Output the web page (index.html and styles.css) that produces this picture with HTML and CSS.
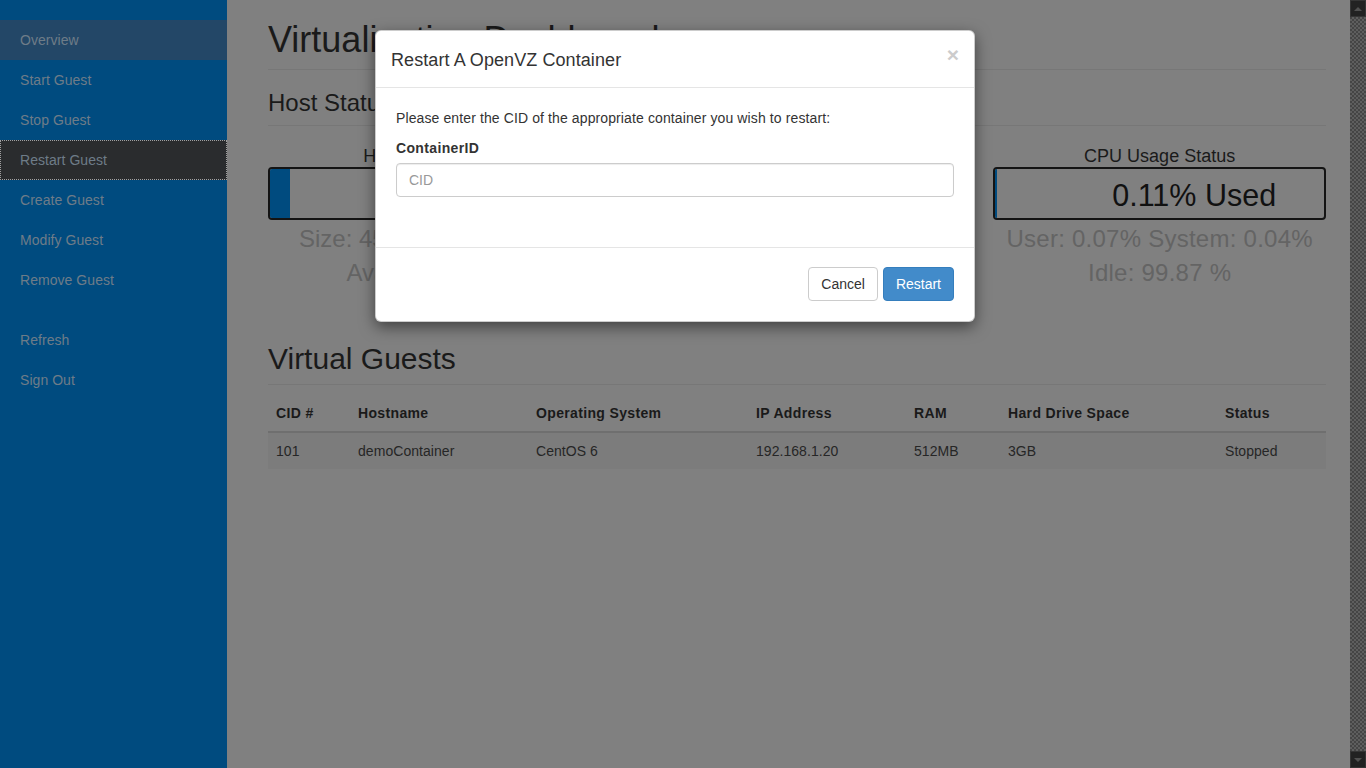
FILE: index.html
```html
<!DOCTYPE html>
<html lang="en">
<head>
<meta charset="utf-8">
<title>Virtualization Dashboard</title>
<link rel="stylesheet" href="styles.css">
</head>
<body class="page">
  <nav class="sidebar">
    <ul class="nav">
      <li class="nav-item active">Overview</li>
      <li class="nav-item">Start Guest</li>
      <li class="nav-item">Stop Guest</li>
      <li class="nav-item focused">Restart Guest</li>
      <li class="nav-item">Create Guest</li>
      <li class="nav-item">Modify Guest</li>
      <li class="nav-item">Remove Guest</li>
    </ul>
    <ul class="nav nav-secondary">
      <li class="nav-item">Refresh</li>
      <li class="nav-item">Sign Out</li>
    </ul>
  </nav>

  <main class="main">
    <h1 class="page-title">Virtualization Dashboard</h1>
    <h3 class="section-title">Host Status</h3>
    <div class="status-row">
      <div class="status-col">
        <div class="status-label">Hard Drive Status</div>
        <div class="bar">
          <div class="bar-fill" style="width:6%"></div>
          <div class="bar-text">6% Used</div>
        </div>
        <div class="stats stats-tight">Size: 45G Used: 3G (6%)<br>Available: 42.0G</div>
      </div>
      <div class="status-col">
        <div class="status-label">Memory Usage Status</div>
        <div class="bar">
          <div class="bar-fill" style="width:20%"></div>
          <div class="bar-text">20% Used</div>
        </div>
        <div class="stats">Total: 2048MB Used: 410MB<br>Free: 1638MB</div>
      </div>
      <div class="status-col">
        <div class="status-label">CPU Usage Status</div>
        <div class="bar">
          <div class="bar-fill" style="width:0.6%"></div>
          <div class="bar-text">0.11% Used</div>
        </div>
        <div class="stats">User: 0.07% System: 0.04%<br>Idle: 99.87 %</div>
      </div>
    </div>

    <h2 class="section-title guests-title">Virtual Guests</h2>
    <table class="guests">
      <colgroup>
        <col class="c-cid"><col class="c-host"><col class="c-os"><col class="c-ip"><col class="c-ram"><col class="c-hdd"><col class="c-status">
      </colgroup>
      <thead>
        <tr><th>CID #</th><th>Hostname</th><th>Operating System</th><th>IP Address</th><th>RAM</th><th>Hard Drive Space</th><th>Status</th></tr>
      </thead>
      <tbody>
        <tr><td>101</td><td>demoContainer</td><td>CentOS 6</td><td>192.168.1.20</td><td>512MB</td><td>3GB</td><td>Stopped</td></tr>
      </tbody>
    </table>
  </main>

  <div class="scrollbar">
    <div class="sb-btn"><span class="tri-up"></span></div>
    <div class="sb-track"></div>
    <div class="sb-btn"><span class="tri-down"></span></div>
  </div>

  <div class="modal">
    <div class="modal-header">
      <h4 class="modal-title">Restart A OpenVZ Container</h4>
      <span class="close">&times;</span>
    </div>
    <div class="modal-body">
      <p class="modal-text">Please enter the CID of the appropriate container you wish to restart:</p>
      <label class="field-label" for="cid">ContainerID</label>
      <input class="field-input" id="cid" type="text" placeholder="CID">
    </div>
    <div class="modal-footer">
      <button class="btn btn-default">Cancel</button>
      <button class="btn btn-primary">Restart</button>
    </div>
  </div>
</body>
</html>
```

FILE: styles.css
```css
* { box-sizing: border-box; }

html, body { margin: 0; padding: 0; }

.page {
  display: flex;
  width: 1366px;
  height: 768px;
  overflow: hidden;
  background: #808080;
  font-family: "Liberation Sans", Arial, sans-serif;
  font-size: 14px;
  line-height: 20px;
  color: #1a1a1a;
}

/* Sidebar */
.sidebar {
  width: 227px;
  flex: 0 0 227px;
  background: #004b7f;
  padding-top: 20px;
}
.nav { list-style: none; margin: 0; padding: 0; }
.nav-secondary { margin-top: 20px; }
.nav-item {
  height: 40px;
  line-height: 40px;
  padding-left: 20px;
  color: #6e7c88;
  font-size: 14px;
  letter-spacing: 0.05px;
}
.nav-item.active { background: #234767; }
.nav-item.focused {
  background: #2a2c2e;
  outline: 1px dotted #a0a0a0;
  outline-offset: -1px;
}

/* Main */
.main {
  flex: 1 1 auto;
  padding: 0 24px 0 41px;
  min-width: 0;
}
.page-title {
  margin: 20px 0 20px;
  padding-bottom: 9px;
  border-bottom: 1px solid #777;
  font-size: 36px;
  line-height: 1.1;
  font-weight: normal;
  color: #1a1a1a;
}
.section-title {
  margin: 0;
  padding-bottom: 9px;
  border-bottom: 1px solid #777;
  font-size: 24px;
  line-height: 1.1;
  font-weight: normal;
  color: #1a1a1a;
}
.status-row {
  display: grid;
  grid-template-columns: repeat(3, 1fr);
  column-gap: 30px;
  margin-top: 20px;
}
.status-col { text-align: center; }
.status-label {
  font-size: 18px;
  line-height: 20px;
  margin-bottom: 1px;
  color: #1a1a1a;
}
.bar {
  position: relative;
  height: 53px;
  border: 2px solid #141414;
  border-radius: 4px;
  overflow: hidden;
  display: flex;
  align-items: center;
}
.bar-fill {
  align-self: stretch;
  background: #004b7f;
  flex: 0 0 auto;
}
.bar-text {
  position: absolute;
  left: 0; right: 0; top: 0; bottom: 0;
  display: flex;
  align-items: center;
  justify-content: center;
  padding-left: 69px;
  padding-top: 3px;
  font-size: 30.5px;
  color: #111;
}
.stats {
  margin-top: 2px;
  font-size: 24px;
  line-height: 34px;
  letter-spacing: 0.25px;
  color: #646464;
}
.stats-tight { letter-spacing: 0; }
.guests-title {
  margin-top: 52px;
  font-size: 30px;
  padding-bottom: 9px;
}

/* Table */
.guests {
  width: 100%;
  margin-top: 10px;
  border-collapse: collapse;
  table-layout: fixed;
  font-size: 14px;
  color: #1a1a1a;
}
.c-cid { width: 82px; }
.c-host { width: 178px; }
.c-os { width: 220px; }
.c-ip { width: 158px; }
.c-ram { width: 94px; }
.c-hdd { width: 217px; }
.c-status { width: auto; }
.guests th, .guests td {
  padding: 8px;
  line-height: 20px;
  text-align: left;
  white-space: nowrap;
}
.guests th {
  font-weight: bold;
  letter-spacing: 0.35px;
  border-bottom: 2px solid #6f6f6f;
}
.guests tbody tr { background: #7c7c7c; }
.guests td { color: #262626; letter-spacing: 0.05px; }

/* Scrollbar */
.scrollbar {
  width: 16px;
  flex: 0 0 16px;
  display: flex;
  flex-direction: column;
}
.sb-track {
  flex: 1 1 auto;
  background-color: #454545;
  background-image: repeating-conic-gradient(#5e5e5e 0 25%, #454545 0 50%);
  background-size: 4px 4px;
}
.sb-btn {
  height: 17px;
  background: #222;
  border: 1px solid #353535;
  display: flex;
  align-items: center;
  justify-content: center;
}
.tri-up, .tri-down {
  width: 0; height: 0;
  border-left: 4px solid transparent;
  border-right: 4px solid transparent;
}
.tri-up { border-bottom: 4px solid #505050; }
.tri-down { border-top: 4px solid #505050; }

/* Modal */
.modal {
  position: absolute;
  top: 30px;
  left: 375px;
  width: 600px;
  background: #fff;
  border: 1px solid rgba(0, 0, 0, 0.2);
  border-radius: 6px;
  box-shadow: 0 5px 15px rgba(0, 0, 0, 0.5);
  color: #333;
}
.modal-header {
  display: flex;
  justify-content: space-between;
  align-items: flex-start;
  padding: 17px 15px 13px;
  border-bottom: 1px solid #e5e5e5;
}
.modal-title {
  margin: 0;
  font-size: 18px;
  line-height: 1.42857;
  font-weight: normal;
  letter-spacing: 0.08px;
  color: #333;
}
.close {
  font-size: 21px;
  font-weight: bold;
  line-height: 1;
  color: #ccc;
  margin-top: -4px;
  margin-right: 0;
}
.modal-body {
  padding: 20px 20px 50px;
}
.modal-text { margin: 0 0 10px; line-height: 20px; letter-spacing: 0.11px; }
.field-label {
  display: block;
  font-weight: bold;
  letter-spacing: 0.35px;
  margin-bottom: 5px;
  line-height: 20px;
}
.field-input {
  display: block;
  width: 100%;
  height: 34px;
  padding: 6px 12px;
  font-family: "Liberation Sans", Arial, sans-serif;
  font-size: 14px;
  line-height: 20px;
  color: #555;
  border: 1px solid #ccc;
  border-radius: 4px;
  box-shadow: inset 0 1px 1px rgba(0, 0, 0, 0.075);
  outline: none;
}
.field-input::placeholder { color: #999; }
.modal-footer {
  display: flex;
  justify-content: flex-end;
  gap: 5px;
  padding: 19px 20px 20px;
  border-top: 1px solid #e5e5e5;
}
.btn {
  height: 34px;
  padding: 6px 12px;
  font-family: "Liberation Sans", Arial, sans-serif;
  font-size: 14px;
  line-height: 20px;
  border: 1px solid transparent;
  border-radius: 4px;
}
.btn-default { background: #fff; border-color: #ccc; color: #333; }
.btn-primary { background: #428bca; border-color: #357ebd; color: #fff; }
```
